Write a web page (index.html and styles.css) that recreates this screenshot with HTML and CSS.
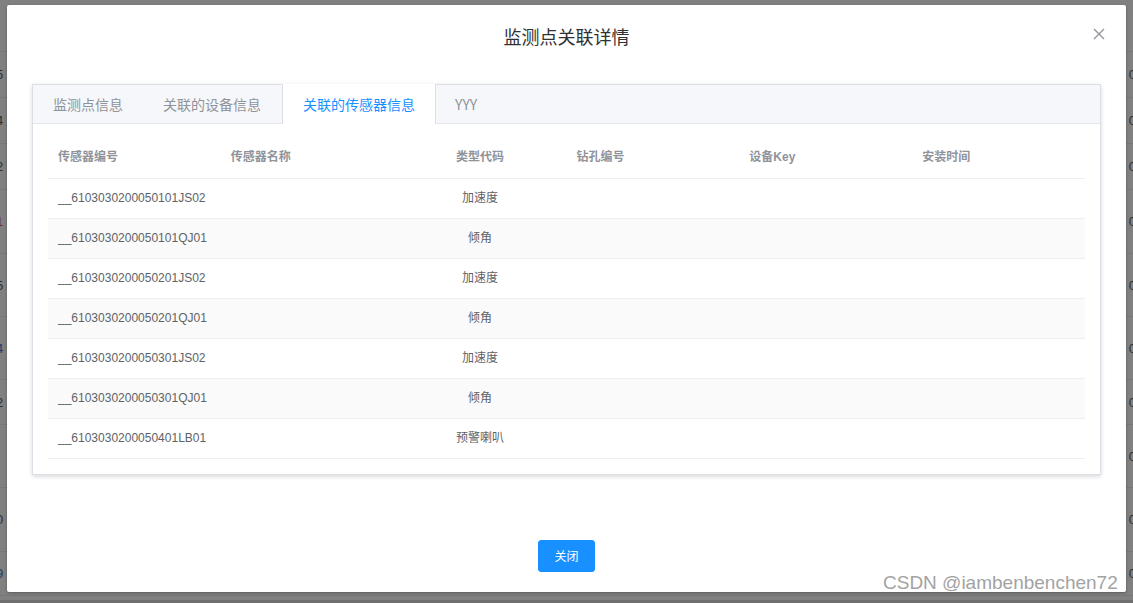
FILE: index.html
```html
<!DOCTYPE html>
<html lang="zh-CN">
<head>
<meta charset="utf-8">
<title>监测点关联详情</title>
<link rel="stylesheet" href="styles.css">
</head>
<body>
<div class="page">
  <div class="bg-row h52"><span class="l"></span><span class="r"></span></div>
  <div class="bg-row h46"><span class="l">5</span><span class="r">0</span></div>
  <div class="bg-row h46"><span class="l">4</span><span class="r">0</span></div>
  <div class="bg-row h46"><span class="l">2</span><span class="r">0</span></div>
  <div class="bg-row h64"><span class="l red">1</span><span class="r">0</span></div>
  <div class="bg-row h63"><span class="l">5</span><span class="r">0</span></div>
  <div class="bg-row h63"><span class="l blue">4</span><span class="r">0</span></div>
  <div class="bg-row h45"><span class="l">2</span><span class="r">0</span></div>
  <div class="bg-row h63"><span class="l"></span><span class="r">0</span></div>
  <div class="bg-row h64"><span class="l">0</span><span class="r">0</span></div>
  <div class="bg-row h44"><span class="l blue">9</span><span class="r">0</span></div>
  <div class="bg-bottom"></div>
</div>

<div class="dialog">
  <div class="dialog-header">
    <span class="dialog-title">监测点关联详情</span>
    <button class="dialog-close" aria-label="关闭">
      <svg width="12" height="12" viewBox="0 0 12 12"><path d="M1 1L11 11M11 1L1 11" stroke="#909399" stroke-width="1.3" fill="none"/></svg>
    </button>
  </div>
  <div class="dialog-body">
    <div class="card">
      <div class="tabs-header">
        <div class="tab">监测点信息</div>
        <div class="tab">关联的设备信息</div>
        <div class="tab active">关联的传感器信息</div>
        <div class="tab">YYY</div>
      </div>
      <div class="tabs-content">
        <table class="grid">
          <thead>
            <tr><th>传感器编号</th><th>传感器名称</th><th class="c">类型代码</th><th>钻孔编号</th><th>设备Key</th><th>安装时间</th></tr>
          </thead>
          <tbody>
            <tr><td>__6103030200050101JS02</td><td></td><td class="c">加速度</td><td></td><td></td><td></td></tr>
            <tr class="stripe"><td>__6103030200050101QJ01</td><td></td><td class="c">倾角</td><td></td><td></td><td></td></tr>
            <tr><td>__6103030200050201JS02</td><td></td><td class="c">加速度</td><td></td><td></td><td></td></tr>
            <tr class="stripe"><td>__6103030200050201QJ01</td><td></td><td class="c">倾角</td><td></td><td></td><td></td></tr>
            <tr><td>__6103030200050301JS02</td><td></td><td class="c">加速度</td><td></td><td></td><td></td></tr>
            <tr class="stripe"><td>__6103030200050301QJ01</td><td></td><td class="c">倾角</td><td></td><td></td><td></td></tr>
            <tr><td>__6103030200050401LB01</td><td></td><td class="c">预警喇叭</td><td></td><td></td><td></td></tr>
          </tbody>
        </table>
      </div>
    </div>
  </div>
  <div class="dialog-footer">
    <button class="btn-primary">关闭</button>
  </div>
</div>

<div class="watermark">CSDN @iambenbenchen72</div>
</body>
</html>
```

FILE: styles.css
```css
* { box-sizing: border-box; }

body {
  margin: 0;
  width: 1133px;
  height: 603px;
  overflow: hidden;
  position: relative;
  background: #808080;
  font-family: "Liberation Sans", "Noto Sans CJK SC", sans-serif;
}

/* background page under the mask */
.page {
  display: flex;
  flex-direction: column;
  height: 603px;
}
.bg-row {
  display: flex;
  justify-content: space-between;
  align-items: center;
  border-bottom: 1px solid #76777a;
  font-size: 13px;
  color: #2e2f31;
  flex: none;
}
.bg-row .l { margin-left: -4px; }
.bg-row .r { margin-right: -3px; }
.bg-row .red { color: #6e2a2a; }
.bg-row .blue { color: #1f3a66; }
.h52 { height: 52px; }
.h46 { height: 46px; }
.h45 { height: 45px; }
.h44 { height: 44px; }
.h63 { height: 63px; }
.h64 { height: 64px; }
.bg-bottom {
  flex: 1;
  border-top: 4px solid #808080;
  background: #6f6f6f;
}

/* dialog */
.dialog {
  position: absolute;
  left: 7px;
  top: 5px;
  width: 1119px;
  height: 587px;
  background: #fff;
  border-radius: 2px;
  box-shadow: 0 1px 3px rgba(0, 0, 0, 0.3);
  display: flex;
  flex-direction: column;
}
.dialog-header {
  padding: 19px 20px 11px;
  text-align: center;
  position: relative;
}
.dialog-title {
  display: block;
  font-size: 18px;
  line-height: 24px;
  color: #303133;
  font-family: "Noto Sans CJK SC", sans-serif;
}
.dialog-close {
  position: absolute;
  top: 23px;
  right: 21px;
  width: 12px;
  height: 12px;
  padding: 0;
  border: 0;
  background: none;
  display: flex;
}
.dialog-body {
  flex: 1;
  padding: 25px 25px 0;
}
.dialog-footer {
  padding: 10px 20px 20px;
  display: flex;
  justify-content: center;
}
.btn-primary {
  height: 32px;
  padding: 0 15px;
  border: 1px solid #1890ff;
  background: #1890ff;
  color: #fff;
  font-size: 12px;
  font-family: "Noto Sans CJK SC", sans-serif;
  border-radius: 3px;
  line-height: 30px;
}

/* card tabs */
.card {
  border: 1px solid #dcdfe6;
  background: #fff;
  box-shadow: 0 2px 4px rgba(0, 0, 0, 0.12), 0 0 6px rgba(0, 0, 0, 0.04);
}
.tabs-header {
  display: flex;
  height: 39px;
  background: #f5f7fa;
  border-bottom: 1px solid #e4e7ed;
}
.tab {
  height: 40px;
  margin-top: -1px;
  padding: 1px 20px 0;
  line-height: 38px;
  font-size: 14px;
  color: #909399;
  font-family: "Noto Sans CJK SC", "Liberation Sans", sans-serif;
}
.tab.active {
  background: #fff;
  color: #1890ff;
  border-left: 1px solid #dcdfe6;
  border-right: 1px solid #dcdfe6;
  margin-left: 1px;
  margin-right: -1px;
}
.tabs-content {
  padding: 14px 15px 15px;
}

/* table */
.grid {
  width: 100%;
  border-collapse: collapse;
  table-layout: fixed;
  font-size: 12px;
}
.grid th,
.grid td {
  padding: 8px 10px;
  line-height: 23px;
  height: 40px;
  border-bottom: 1px solid #ebeef5;
  text-align: left;
  white-space: nowrap;
  overflow: hidden;
}
.grid th {
  color: #909399;
  font-weight: bold;
}
.grid td { color: #606266; }
.grid .c { text-align: center; }
.grid tr.stripe td { background: #fafafa; }

.watermark {
  position: absolute;
  left: 883px;
  top: 572px;
  font-size: 19px;
  line-height: 22px;
  color: #a3a3a3;
  text-shadow: 0 0 1px #ffffff;
  white-space: nowrap;
}
```
